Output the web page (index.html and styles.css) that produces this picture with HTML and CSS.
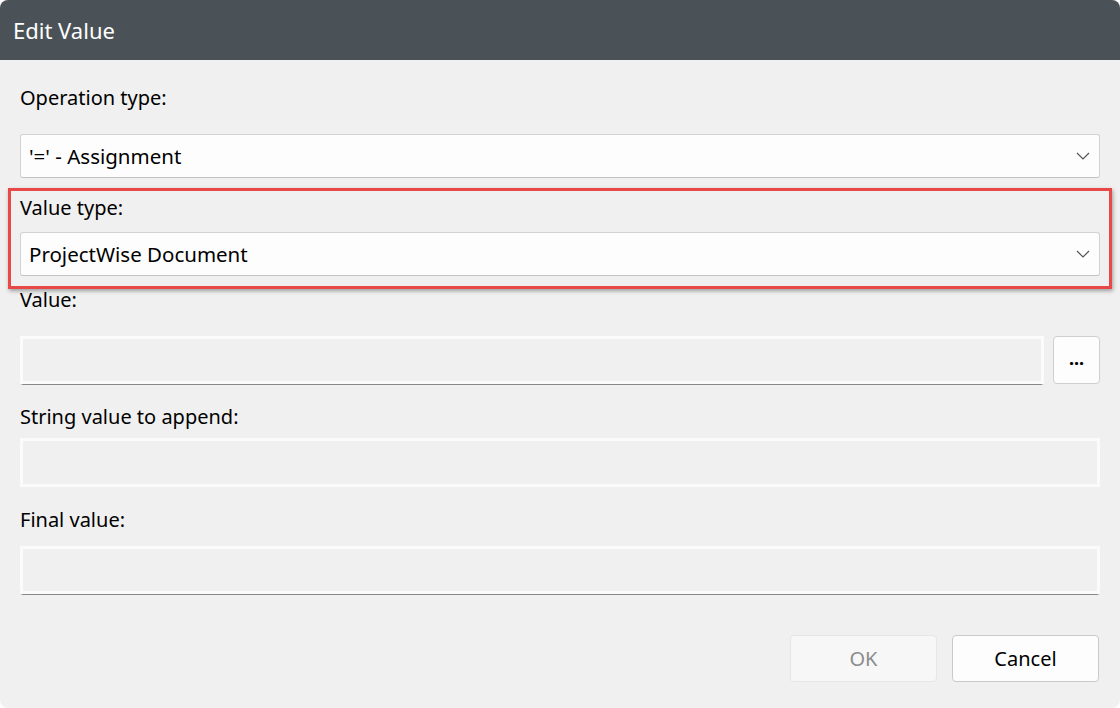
FILE: index.html
```html
<!DOCTYPE html>
<html>
<head>
<meta charset="utf-8">
<link rel="stylesheet" href="styles.css">
</head>
<body>
<div class="window">
  <div class="titlebar">Edit Value</div>
  <div class="content">
    <div class="label first">Operation type:</div>
    <div class="combo">
      <span>'=' - Assignment</span>
      <svg class="chev" width="14" height="8" viewBox="0 0 14 8"><path d="M1 1 L7 7 L13 1" fill="none" stroke="#555" stroke-width="1.2"/></svg>
    </div>
    <div class="highlight">
      <div class="label hl">Value type:</div>
      <div class="combo">
        <span>ProjectWise Document</span>
        <svg class="chev" width="14" height="8" viewBox="0 0 14 8"><path d="M1 1 L7 7 L13 1" fill="none" stroke="#555" stroke-width="1.2"/></svg>
      </div>
    </div>
    <div class="label after-hl">Value:</div>
    <div class="row">
      <div class="field underline grow"></div>
      <div class="browse">...</div>
    </div>
    <div class="label after-row">String value to append:</div>
    <div class="field"></div>
    <div class="label after-field">Final value:</div>
    <div class="field underline"></div>
    <div class="buttons">
      <div class="btn disabled">OK</div>
      <div class="btn">Cancel</div>
    </div>
  </div>
</div>
</body>
</html>
```
FILE: styles.css
```css
html, body {
  margin: 0;
  padding: 0;
  background: #ffffff;
}
body {
  font-family: "Noto Sans", "Open Sans", sans-serif;
  width: 1120px;
  height: 708px;
  overflow: hidden;
}
.window {
  width: 1120px;
  height: 708px;
  box-sizing: border-box;
  background: #f0f0f0;
  border-radius: 8px;
  overflow: hidden;
  display: flex;
  flex-direction: column;
}
.titlebar {
  height: 60px;
  background: #4b5257;
  color: #ffffff;
  font-size: 22px;
  padding-left: 13px;
  display: flex;
  align-items: center;
  flex-shrink: 0;
}
.content {
  padding: 0 20px 0 20px;
  display: flex;
  flex-direction: column;
}
.label {
  font-size: 20px;
  color: #000;
  height: 24px;
  line-height: 24px;
}
.label.first {
  margin-top: 26px;
  margin-bottom: 24px;
}
.combo {
  height: 44px;
  box-sizing: border-box;
  background: #fdfdfd;
  border: 1px solid #d2d2d2;
  border-bottom-color: #c2c2c2;
  border-radius: 3px;
  display: flex;
  align-items: center;
  justify-content: space-between;
  padding: 0 9px 0 8px;
  font-size: 20.5px;
}
.chev {
  display: block;
}
.highlight {
  margin: 10px -12px 0 -12px;
  border: 3px solid #e84848;
  padding: 5px 9px 10px 9px;
  box-shadow: 1px 2px 4px rgba(0,0,0,0.35);
}
.label.hl {
  margin-bottom: 12px;
}
.label.after-hl {
  margin-top: -1px;
  margin-bottom: 24px;
}
.row {
  display: flex;
  gap: 9px;
}
.grow {
  flex: 1;
}
.field {
  height: 49px;
  box-sizing: border-box;
  border: 3px solid #fbfbfb;
  background: #f0f0f0;
}
.field.underline {
  border-bottom: 1px solid #878787;
  box-shadow: inset 0 -3px 0 #fbfbfb;
}
.browse {
  width: 47px;
  height: 48px;
  box-sizing: border-box;
  background: #fdfdfd;
  border: 1px solid #cfcfcf;
  border-radius: 4px;
  display: flex;
  align-items: center;
  justify-content: center;
  font-size: 18px;
  font-weight: bold;
  padding-bottom: 4px;
}
.label.after-row {
  margin-top: 20px;
  margin-bottom: 9px;
}
.label.after-field {
  margin-top: 21px;
  margin-bottom: 14px;
}
.buttons {
  display: flex;
  justify-content: flex-end;
  gap: 15px;
  margin-top: 40px;
  padding-right: 1px;
}
.btn {
  width: 147px;
  height: 47px;
  box-sizing: border-box;
  border: 1px solid #c9c9c9;
  border-radius: 4px;
  background: #fdfdfd;
  display: flex;
  align-items: center;
  justify-content: center;
  font-size: 20px;
  color: #000;
}
.btn.disabled {
  background: #f7f7f7;
  border-color: #e6e6e6;
  color: #8c8c8c;
}
```
